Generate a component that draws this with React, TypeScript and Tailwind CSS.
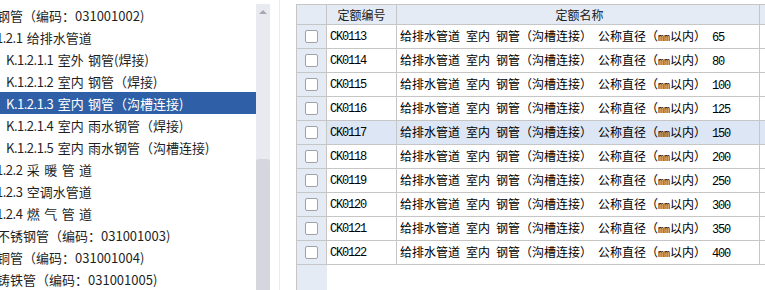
import { Fragment } from "react";

const treeItems = [
  { level: 1, code: "K.1.2", text: "钢管（编码：031001002)" },
  { level: 2, code: "K.1.2.1", text: "给排水管道" },
  { level: 3, code: "K.1.2.1.1", text: "室外 钢管(焊接)" },
  { level: 3, code: "K.1.2.1.2", text: "室内 钢管（焊接)" },
  { level: 3, code: "K.1.2.1.3", text: "室内 钢管（沟槽连接)", selected: true },
  { level: 3, code: "K.1.2.1.4", text: "室内 雨水钢管（焊接)" },
  { level: 3, code: "K.1.2.1.5", text: "室内 雨水钢管（沟槽连接)" },
  { level: 2, code: "K.1.2.2", text: "采 暖 管 道" },
  { level: 2, code: "K.1.2.3", text: "空调水管道" },
  { level: 2, code: "K.1.2.4", text: "燃 气 管 道" },
  { level: 1, code: "K.1.3", text: "不锈钢管（编码：031001003)" },
  { level: 1, code: "K.1.4", text: "铜管（编码：031001004)" },
  { level: 1, code: "K.1.5", text: "铸铁管（编码：031001005)" },
];

const rows = [
  { code: "CK0113", size: "65" },
  { code: "CK0114", size: "80" },
  { code: "CK0115", size: "100" },
  { code: "CK0116", size: "125" },
  { code: "CK0117", size: "150", selected: true },
  { code: "CK0118", size: "200" },
  { code: "CK0119", size: "250" },
  { code: "CK0120", size: "300" },
  { code: "CK0121", size: "350" },
  { code: "CK0122", size: "400" },
];

function TreeRow({
  level,
  code,
  text,
  selected,
}: {
  level: number;
  code: string;
  text: string;
  selected?: boolean;
}) {
  const indent = level === 1 ? "-ml-[35px]" : level === 2 ? "-ml-[15px]" : "ml-[6px]";
  return (
    <div
      className={`h-[22px] flex items-center whitespace-nowrap overflow-hidden ${
        selected ? "bg-[#2f5fa7] text-white" : "text-[#1f1f1f]"
      }`}
    >
      <span className={`${indent} whitespace-pre [word-spacing:1.5px]`}>
        <span className="tracking-[-0.5px]">{code}</span> {text}
      </span>
    </div>
  );
}

function Checkbox() {
  return <div className="w-[13px] h-[13px] rounded-[2px] border-[1.5px] border-[#a2a2a2] bg-white" />;
}

function NameText({ size }: { size: string }) {
  return (
    <span className="whitespace-nowrap">
      给排水管道<span className="inline-block w-[6px]" />室内<span className="inline-block w-[6px]" />钢管（沟槽连接）
      <span className="inline-block w-[6px]" />公称直径（
      <span className="font-['Liberation_Mono',monospace] text-[10px]">mm</span>以内）
      <span className="inline-block w-[6px]" />
      <span className="font-['Liberation_Mono',monospace] text-[12px] tracking-[-1.2px]">{size}</span>
    </span>
  );
}

export default function App() {
  return (
    <div className="flex w-[765px] h-[290px] overflow-hidden bg-white font-['Noto_Sans_CJK_SC',sans-serif]">
      {/* tree */}
      <div className="flex w-[270px] pt-[4px] shrink-0">
        <div className="w-[256px] overflow-hidden text-[13px] leading-none">
          {treeItems.map((item, i) => (
            <TreeRow key={i} {...item} />
          ))}
        </div>
        <div className="w-[14px] bg-[#e9eaef] flex flex-col">
          <div className="h-[16px] flex items-center justify-center">
            <div className="w-0 h-0 border-l-[4px] border-r-[4px] border-b-[4px] border-l-transparent border-r-transparent border-b-[#a5a9b5]" />
          </div>
          <div className="h-[139px]" />
          <div className="flex-1 bg-[#d5d7de] rounded-t-[3px]" />
        </div>
      </div>

      <div className="w-[9px] shrink-0" />
      <div className="w-px bg-[#ececec] shrink-0" />
      <div className="w-[16px] shrink-0" />

      {/* table */}
      <div className="flex-1 pt-[4px] flex flex-col">
        <div className="flex-1 flex flex-col border-l border-t border-[#c6c6c6]">
          <div className="flex h-[20px] bg-[#e4ebf5] border-b border-[#c6c6c6] text-[12px] text-[#202020]">
            <div className="w-[30px] shrink-0 border-r border-[#c6c6c6]" />
            <div className="w-[70px] shrink-0 border-r border-[#c6c6c6] flex items-center justify-center">定额编号</div>
            <div className="w-[363px] shrink-0 border-r border-[#c6c6c6] flex items-center justify-center pl-[3px]">定额名称</div>
            <div className="flex-1" />
          </div>
          {rows.map((r) => (
            <Fragment key={r.code}>
              <div
                className={`flex h-[24px] border-b border-[#c6c6c6] text-[12px] text-black ${
                  r.selected ? "bg-[#dce6f4]" : "bg-white"
                }`}
              >
                <div className="w-[30px] shrink-0 border-r border-[#c6c6c6] bg-[#e4ebf5] flex items-center justify-center">
                  <Checkbox />
                </div>
                <div className="w-[70px] shrink-0 border-r border-[#c6c6c6] flex items-center pl-[3px] font-['Liberation_Mono',monospace] text-[12px] tracking-[-1.2px]">
                  {r.code}
                </div>
                <div className="w-[363px] shrink-0 border-r border-[#c6c6c6] flex items-center pl-[3px]">
                  <NameText size={r.size} />
                </div>
                <div className="flex-1" />
              </div>
            </Fragment>
          ))}
          <div className="flex-1 flex">
            <div className="w-[30px] bg-[#e4ebf5]" />
          </div>
        </div>
      </div>
    </div>
  );
}
